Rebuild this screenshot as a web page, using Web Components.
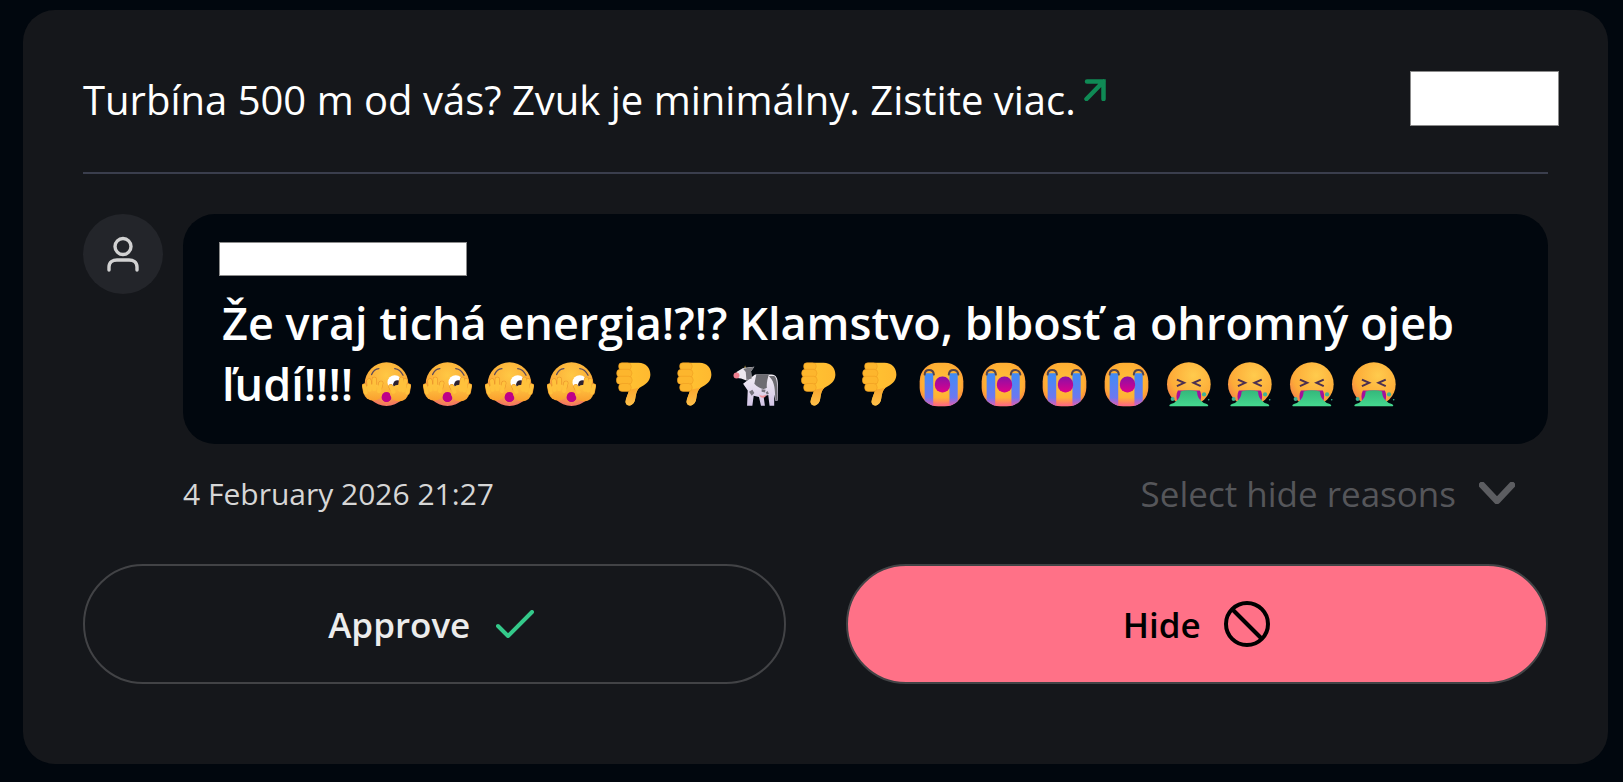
<!DOCTYPE html>
<html lang="sk">
<head>
<meta charset="utf-8">
<title>Moderation</title>
<style>
  html, body { margin: 0; height: 100%; background: #01070e; }
  body { font-family: "Open Sans", "Noto Sans", sans-serif; overflow: hidden; }
</style>
</head>
<body>
<mod-card>
  <span slot="title">Turbína 500 m od vás? Zvuk je minimálny. Zistite viac.</span>
  <comment-bubble>Že vraj tichá energia!?!? Klamstvo, blbosť a ohromný ojeb ľudí!!!!<x-emoji name="peek"></x-emoji><x-emoji name="peek"></x-emoji><x-emoji name="peek"></x-emoji><x-emoji name="peek"></x-emoji><x-emoji name="down"></x-emoji><x-emoji name="down"></x-emoji><x-emoji name="cow"></x-emoji><x-emoji name="down"></x-emoji><x-emoji name="down"></x-emoji><x-emoji name="cry"></x-emoji><x-emoji name="cry"></x-emoji><x-emoji name="cry"></x-emoji><x-emoji name="cry"></x-emoji><x-emoji name="sick"></x-emoji><x-emoji name="sick"></x-emoji><x-emoji name="sick"></x-emoji><x-emoji name="sick"></x-emoji></comment-bubble>
  <span slot="date">4 February 2026 21:27</span>
  <reason-select slot="reasons">Select hide reasons</reason-select>
  <action-button slot="actions" kind="approve">Approve</action-button>
  <action-button slot="actions" kind="hide">Hide</action-button>
</mod-card>

<script>
// Dedos de las manos: mismo trazo dos veces (contorno + relleno)
const HAND_L = 'M72 130L68 110M84 122L82 95M98 120L98 90M112 126L118 102';
const HAND_R = 'M198 130L202 110M186 124L192 95M176 122L180 90M156 128L148 112';

// Emojis trazados en las coordenadas de la captura ampliada (viewBox = recorte)
const EMOJIS = {
  peek: { box: '62 38 146 136', w: 49, h: 45, art: `
    <defs>
      <radialGradient id="f" cx=".5" cy=".3" r=".75"><stop offset="0" stop-color="#ffc844"/><stop offset=".6" stop-color="#fcae38"/><stop offset="1" stop-color="#f0666e"/></radialGradient>
      <linearGradient id="h" x1="0" y1="0" x2="0" y2="1"><stop offset="0" stop-color="#ffc844"/><stop offset="1" stop-color="#fa9f2e"/></linearGradient>
    </defs>
    <circle cx="135" cy="105" r="66" fill="url(#f)"/>
    <path d="M90 76Q97 59 112 58M160 58Q176 60 185 78" fill="none" stroke="#5b4a5c" stroke-width="4" stroke-linecap="round"/>
    <circle cx="160" cy="100" r="22" fill="#fff"/><circle cx="168" cy="106" r="13" fill="#2b2130"/>
    <circle cx="135" cy="144" r="15" fill="#bf0088"/>
    <g fill="none" stroke-linecap="round">
      <path d="${HAND_L}" stroke="#e8902a" stroke-width="15"/>
      <path d="${HAND_R}" stroke="#e8902a" stroke-width="15"/>
    </g>
    <ellipse cx="95" cy="130" rx="28" ry="25" fill="url(#h)"/>
    <ellipse cx="173" cy="132" rx="28" ry="25" fill="url(#h)"/>
    <g fill="none" stroke="#ffc23c" stroke-linecap="round" stroke-width="12">
      <path d="${HAND_L}"/><path d="${HAND_R}"/>
    </g>
    <circle cx="135" cy="146" r="13" fill="#bf0088"/>` },
  down: { box: '826 38 106 136', w: 35, h: 45, art: `
    <defs>
      <linearGradient id="b" x1="0" y1="0" x2="1" y2="0"><stop offset="0" stop-color="#ffc332"/><stop offset="1" stop-color="#ffb930"/></linearGradient>
      <linearGradient id="t" x1="0" y1="0" x2="0" y2="1"><stop offset="0" stop-color="#f9a62c"/><stop offset="1" stop-color="#ffc04a"/></linearGradient>
    </defs>
    <path d="M866 40H894C918 40 931 58 930 78 929 98 914 107 900 114 889 120 887 132 884 150 881 172 858 176 855 160 854 150 863 136 866 122L850 100Z" fill="url(#b)"/>
    <path d="M866 122C863 136 854 150 855 160 858 176 881 172 884 150 886 136 888 124 897 116Z" fill="url(#t)"/>
    <g fill="#fdb62d" stroke="#ee9a20" stroke-width="1.6">
      <rect x="834" y="40" width="38" height="22" rx="10"/>
      <rect x="828" y="60" width="46" height="24" rx="11"/>
      <rect x="827" y="81" width="48" height="24" rx="11"/>
      <rect x="834" y="103" width="38" height="24" rx="11"/>
    </g>` },
  cow: { box: '98 40 138 130', w: 46, h: 43, art: `
    <defs><linearGradient id="c" x1="0" y1="0" x2="0" y2="1"><stop offset="0" stop-color="#f2eef4"/><stop offset="1" stop-color="#d2c4e6"/></linearGradient></defs>
    <path d="M134 44l3 12-6 0Z" fill="#d9b24a"/>
    <path d="M164 72H214C228 72 233 84 233 100V150L226 152 222 132 222 166H208L204 134 190 138 194 166H182L176 140 160 136 156 166H146L148 166 140 166 142 120 128 100Z" fill="url(#c)"/>
    <path d="M168 72H206C202 84 198 100 200 112 190 120 172 112 162 100Z" fill="#6d6c72"/>
    <path d="M206 76H222C230 82 232 96 232 150L226 150C224 130 226 104 214 86Z" fill="#6d6c72"/>
    <path d="M146 124l10 -6 6 10-8 8ZM184 116l12 2-2 8-10-2ZM196 126l6-4 4 8-6 2Z" fill="#77747e"/>
    <path d="M176 132q10 8 22 0l-3 8q-8 4-14 0Z" fill="#ef8f96"/>
    <path d="M108 64L128 52 148 50 162 48 152 62 154 82 138 90 122 84 110 82Z" fill="#ece8ee"/>
    <path d="M128 54L162 48 152 62 154 84 138 88 136 64Z" fill="#77767c"/>
    <ellipse cx="108" cy="75" rx="9" ry="9" fill="#ef7f8f"/>` },
  cry: { box: '656 38 136 136', w: 45, h: 45, art: `
    <defs>
      <radialGradient id="f" cx=".5" cy=".45" r=".6"><stop offset="0" stop-color="#ffc03a"/><stop offset=".75" stop-color="#ffae33"/><stop offset="1" stop-color="#fa7f44"/></radialGradient>
      <linearGradient id="m" x1="0" y1="0" x2="0" y2="1"><stop offset="0" stop-color="#8a10a6"/><stop offset="1" stop-color="#dd008c"/></linearGradient>
      <linearGradient id="w" x1="0" y1="0" x2="0" y2="1"><stop offset="0" stop-color="#3f8cf5"/><stop offset="1" stop-color="#7d70ef"/></linearGradient>
      <linearGradient id="p" x1="0" y1="0" x2="0" y2="1"><stop offset=".8" stop-color="#ff4f9a" stop-opacity="0"/><stop offset="1" stop-color="#ff5c9a" stop-opacity=".8"/></linearGradient>
      <clipPath id="k"><rect x="658" y="40" width="132" height="132" rx="56"/></clipPath>
    </defs>
    <rect x="658" y="40" width="132" height="132" rx="56" fill="url(#f)"/>
    <g clip-path="url(#k)">
      <path d="M673 72H699V172H673ZM748 72H773V172H748Z" fill="url(#w)"/>
      <rect x="658" y="40" width="132" height="132" fill="url(#p)"/>
    </g>
    <path d="M673 76C674 58 699 58 701 76M746 76C748 58 772 58 775 76" fill="none" stroke="#54444c" stroke-width="6" stroke-linecap="round"/>
    <rect x="704" y="82" width="46" height="48" rx="22" fill="url(#m)"/>` },
  sick: { box: '376 38 136 136', w: 45, h: 45, art: `
    <defs>
      <radialGradient id="f" cx=".6" cy=".3" r=".8"><stop offset="0" stop-color="#ffcb4d"/><stop offset=".65" stop-color="#fdab38"/><stop offset="1" stop-color="#f5774d"/></radialGradient>
      <linearGradient id="v" x1="0" y1="0" x2="0" y2="1"><stop offset="0" stop-color="#34b77b"/><stop offset="1" stop-color="#45d98f"/></linearGradient>
    </defs>
    <circle cx="445" cy="105" r="66" fill="url(#f)"/>
    <path d="M409 91L431 101 409 111M481 91L459 101 481 111" fill="none" stroke="#4c3050" stroke-width="6" stroke-linejoin="miter"/>
    <path d="M412 124H478C484 134 483 150 478 160H412C406 150 406 134 412 124Z" fill="#a5109a"/>
    <path d="M420 127Q445 120 470 127C470 140 474 150 490 162 505 166 507 171 500 172H390C383 171 385 166 400 162 416 150 420 140 420 127Z" fill="url(#v)"/>
    <circle cx="396" cy="150" r="6" fill="#3fb295"/><circle cx="491" cy="136" r="6.5" fill="#3fb295"/><circle cx="505" cy="152" r="2.5" fill="#3fb295"/>` }
};

class XEmoji extends HTMLElement {
  connectedCallback() {
    const e = EMOJIS[this.getAttribute('name')];
    this.attachShadow({ mode: 'open' });
    this.shadowRoot.innerHTML = `
      <style>
        :host { display: inline-flex; justify-content: center; align-items: flex-end; width: 46px; height: 45px; margin: 0 5.7px 0 10px; vertical-align: -6px; }
        svg { display: block; flex: none; }
      </style>
      <svg width="${e.w}" height="${e.h}" viewBox="${e.box}">${e.art}</svg>`;
  }
}

class ModCard extends HTMLElement {
  constructor() {
    super();
    this.attachShadow({ mode: 'open' });
    this.shadowRoot.innerHTML = `
      <style>
        :host { display: block; box-sizing: border-box; width: 1585px; height: 754px; margin: 10px 0 0 23px; padding: 61px 60px 0; background: #15171b; border-radius: 32px; }
        header { display: flex; justify-content: space-between; align-items: flex-start; height: 101px; border-bottom: 2px solid #3a3e4d; }
        .title { font-size: 40px; line-height: 54px; color: #fff; padding-top: 2px; }
        .title svg { margin-left: 8px; vertical-align: 14px; }
        .redact { width: 149px; height: 55px; box-sizing: border-box; background: #fff; border: 1px solid #8b8b8b; margin-right: -11px; }
        .row { display: flex; gap: 20px; margin-top: 40px; }
        .avatar { flex: none; width: 80px; height: 80px; border-radius: 50%; background: #23252a; display: flex; align-items: center; justify-content: center; }
        .meta { display: flex; justify-content: space-between; align-items: center; margin: 25px 33px 0 100px; height: 48px; }
        .date { font-size: 30px; color: #d6d6d6; }
        .actions { display: grid; grid-template-columns: 1fr 1fr; gap: 60px; margin-top: 47px; }
      </style>
      <header>
        <div class="title"><slot name="title"></slot><svg width="22" height="22" viewBox="0 0 22 22" fill="none" stroke="#0f8a55" stroke-width="4.5" stroke-linecap="round" stroke-linejoin="miter"><path d="M3 2.5H19.5V20M19.5 2.5L2.5 20"/></svg></div>
        <div class="redact"></div>
      </header>
      <div class="row">
        <div class="avatar">
          <svg width="32" height="36" viewBox="0 0 32 36" fill="none" stroke="#d2d2d2" stroke-width="3.4" stroke-linecap="round"><circle cx="16" cy="10.5" r="8"/><path d="M2 34V31C2 26 6 24 10 24H22C26 24 30 26 30 31V34"/></svg>
        </div>
        <slot></slot>
      </div>
      <div class="meta">
        <div class="date"><slot name="date"></slot></div>
        <slot name="reasons"></slot>
      </div>
      <div class="actions"><slot name="actions"></slot></div>`;
  }
}

class CommentBubble extends HTMLElement {
  constructor() {
    super();
    this.attachShadow({ mode: 'open' });
    this.shadowRoot.innerHTML = `
      <style>
        :host { display: block; flex: 1; min-width: 0; box-sizing: border-box; height: 230px; padding: 28px 36px 0; background: #01070e; border-radius: 32px; }
        .redact { width: 248px; height: 34px; box-sizing: border-box; background: #fff; border: 1px solid #8b8b8b; }
        .text { margin: 16px 0 0 3px; font-size: 45px; font-weight: 600; line-height: 61px; color: #fff; }
      </style>
      <div class="redact"></div>
      <div class="text"><slot></slot></div>`;
  }
}

class ReasonSelect extends HTMLElement {
  constructor() {
    super();
    this.attachShadow({ mode: 'open' });
    this.shadowRoot.innerHTML = `
      <style>
        :host { display: flex; align-items: center; gap: 23px; font-size: 35px; color: #55565a; }
      </style>
      <span><slot></slot></span>
      <svg width="36" height="22" viewBox="0 0 36 22" fill="none" stroke="#5c5d61" stroke-width="6.5" stroke-linecap="round" stroke-linejoin="round"><path d="M3 3L18 19 33 3"/></svg>`;
  }
}

class ActionButton extends HTMLElement {
  static ICONS = {
    approve: '<svg style="margin-right:6px" width="38" height="28" viewBox="0 0 38 28" fill="none" stroke="#34c98a" stroke-width="4" stroke-linecap="round" stroke-linejoin="round"><path d="M2 16L12 26 36 2"/></svg>',
    hide: '<svg width="48" height="48" viewBox="0 0 48 48" fill="none" stroke="#000" stroke-width="4"><circle cx="24" cy="24" r="21"/><path d="M9 9L39 39"/></svg>'
  };
  constructor() {
    super();
    this.attachShadow({ mode: 'open' });
  }
  connectedCallback() {
    const kind = this.getAttribute('kind');
    this.shadowRoot.innerHTML = `
      <style>
        :host { display: flex; align-items: center; justify-content: center; box-sizing: border-box; height: 120px; border-radius: 60px; border: 2px solid #424346; font-size: 35px; font-weight: 600; }
        :host([kind="approve"]) { color: #ececec; gap: 26px; }
        :host([kind="hide"]) { color: #000; background: #ff7187; gap: 22px; }
      </style>
      <span><slot></slot></span>${ActionButton.ICONS[kind]}`;
  }
}

customElements.define('x-emoji', XEmoji);
customElements.define('mod-card', ModCard);
customElements.define('comment-bubble', CommentBubble);
customElements.define('reason-select', ReasonSelect);
customElements.define('action-button', ActionButton);
</script>
</body>
</html>
